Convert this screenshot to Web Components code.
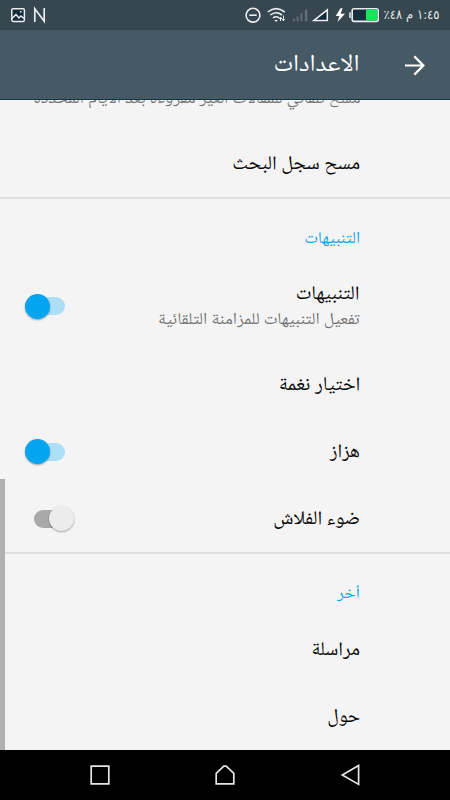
<!DOCTYPE html>
<html lang="ar">
<head>
<meta charset="utf-8">
<title>الاعدادات</title>
<style>
    html, body { margin: 0; height: 100%; overflow: hidden; background: #f4f4f4; }
</style>
</head>
<body>
<settings-screen></settings-screen>

<script>
// One line of Arabic text, condensed or widened to the given width
class FitText extends HTMLElement{
    constructor(){
        super();
        this.attachShadow({ mode: "open" });
    }
    connectedCallback(){
        let width = Number(this.getAttribute("width"));
        this.shadowRoot.innerHTML = `
        <style>
        :host{
            display: flex;
            justify-content: flex-start;
            direction: rtl;
            width: ${width}px;
            white-space: nowrap;
        }
        span{
            flex: none;
            transform-origin: 100% 50%;
        }
        </style>
        <span><slot></slot></span>
        `;
        let span = this.shadowRoot.querySelector("span");
        let natural = span.getBoundingClientRect().width;
        if (natural) span.style.transform = `scaleX(${width / natural})`;
    }
}

class StatusBar extends HTMLElement{
    constructor(){
        super();
        this.attachShadow({ mode: "open" });
    }
    connectedCallback(){
        this.shadowRoot.innerHTML = `
        <style>
        :host{
            display: flex;
            justify-content: space-between;
            direction: ltr;
            height: 30px;
            background: #37474f;
            color: #e4e8ea;
            font-family: "DejaVu Sans", sans-serif;
            font-size: 13px;
            line-height: 29px;
        }
        svg{ display: block; }
        .info{
            display: flex;
            padding-right: 10px;
        }
        .clock{ margin-left: 5px; }
        </style>
        <svg width="60" height="30" fill="none" stroke="#e8edef" stroke-width="1.5">
            <rect x="11.8" y="8.8" width="12.6" height="12.6" rx="1.3" fill="#172c39"/>
            <path d="M12 18.5L16 14.5L19 18L21 16L24 18.5" />
            <path d="M20 11.7h1.6" />
            <path d="M34.8 22V8.8L44.2 21.2V8" stroke-width="1.7"/>
        </svg>
        <div class="info">
            <svg width="136" height="30" fill="none" stroke="#eceff1" stroke-width="1.6">
                <circle cx="10" cy="15.2" r="6.9"/>
                <path d="M6.3 15.2h7.4"/>
                <path d="M24.8 12Q33 5.3 41.8 12M27.3 15Q33 10.4 39 15M30 18Q33 15.5 36 18"/>
                <path d="M31.3 20h3.6l-1.8 2z" fill="#eceff1" stroke="none"/>
                <path d="M37.5 21v-3.6m-1.4 1.6l1.4-1.8 1.4 1.8M40.4 15.5v5.2m-1.3-1.6l1.3 1.7 1.3-1.7" stroke-width="1"/>
                <g fill="#5f6e74" stroke="none">
                    <path d="M50 19h2v2.2h-2zM53.6 16.5h2v4.7h-2zM57.4 13.3h2v7.9h-2zM61.8 9.5h2.6v11.7h-2.6z"/>
                </g>
                <path d="M70.8 20.6L84.3 9.8v10.8z" fill="#122b3b" stroke-width="1.5"/>
                <path d="M97.5 8.2L92.7 16h3.6l-1.8 6 7.5-8.3h-4.3l1.8-5.5z" fill="#fff" stroke="none"/>
                <rect x="109.2" y="8.8" width="26" height="12.6" rx="1.8" fill="#17303e"/>
                <path d="M123 9.8h11.2v10.6h-11.2z" fill="#10ea59" stroke="none"/>
                <path d="M107 12.3v5.6" stroke-width="1.5"/>
            </svg>
            <fit-text class="clock" width="56">١:٤٥ م ٤٨٪</fit-text>
        </div>
        `;
    }
}

class AppBar extends HTMLElement{
    constructor(){
        super();
        this.attachShadow({ mode: "open" });
    }
    connectedCallback(){
        this.shadowRoot.innerHTML = `
        <style>
        :host{
            display: flex;
            direction: rtl;
            align-items: center;
            height: 69px;
            padding-right: 24px;
            background: #455a64;
            border-bottom: 1px solid #123745;
            color: #fff;
            font-size: 24px;
            line-height: 30px;
        }
        fit-text{ margin-right: 44px; }
        </style>
        <svg width="22" height="22" fill="none" stroke="#fff" stroke-width="2.2">
            <path d="M1 11.5h18.5M10.3 2.4L19.4 11.5L10.3 20.6"/>
        </svg>
        <fit-text width="86"><slot></slot></fit-text>
        `;
    }
}

class SettingsHeader extends HTMLElement{
    constructor(){
        super();
        this.attachShadow({ mode: "open" });
    }
    connectedCallback(){
        this.shadowRoot.innerHTML = `
        <style>
        :host{
            display: block;
            box-sizing: border-box;
            height: 64px;
            padding: 28px 90px 0 0;
            border-top: 2px solid #dedede;
            color: #10a5ec;
            font-size: 16.5px;
            line-height: 23px;
        }
        </style>
        <fit-text width="${this.getAttribute("width")}"><slot></slot></fit-text>
        `;
    }
}

class ToggleSwitch extends HTMLElement{
    constructor(){
        super();
        this.attachShadow({ mode: "open" });
    }
    connectedCallback(){
        this.shadowRoot.innerHTML = `
        <style>
        :host{
            display: flex;
            align-items: center;
            direction: ltr;
            width: 51px;
            height: 26px;
        }
        .track{
            display: flex;
            align-items: center;
            width: 31.5px;
            height: 18px;
            margin-left: 9.5px;
            border-radius: 9px;
            background: #a9a9a9;
        }
        .thumb{
            flex: none;
            width: 25px;
            height: 25px;
            margin-left: 15px;
            border-radius: 50%;
            background: #ececec;
            box-shadow: 0 1px 2px rgba(0,0,0,.35);
        }
        :host([on]) .track{ background: #acdff6; }
        :host([on]) .thumb{ margin-left: -9px; background: #03a4f0; }
        </style>
        <div class="track"><div class="thumb"></div></div>
        `;
    }
}

class SettingsRow extends HTMLElement{
    constructor(){
        super();
        this.attachShadow({ mode: "open" });
    }
    connectedCallback(){
        this.shadowRoot.innerHTML = `
        <style>
        :host{
            display: flex;
            direction: rtl;
            align-items: center;
            justify-content: space-between;
            box-sizing: border-box;
            height: 67px;
            padding: 0 90px 0 24px;
            color: #080808;
            font-size: 19.5px;
            line-height: 26px;
        }
        :host([tall]){ height: 90px; }
        .text{ padding-top: 2px; }
        ::slotted([slot="summary"]){
            color: #757575;
            font-size: 16.5px;
            line-height: 24px;
        }
        </style>
        <div class="text">
            <fit-text width="${this.getAttribute("width")}"><slot></slot></fit-text>
            <slot name="summary"></slot>
        </div>
        <slot name="switch"></slot>
        `;
    }
}

class NavBar extends HTMLElement{
    constructor(){
        super();
        this.attachShadow({ mode: "open" });
    }
    connectedCallback(){
        this.shadowRoot.innerHTML = `
        <style>
        :host{
            display: flex;
            align-items: center;
            justify-content: space-around;
            direction: ltr;
            height: 50px;
            padding: 0 37px;
            background: #000;
        }
        </style>
        <svg width="24" height="24" fill="none" stroke="#e6e6e6" stroke-width="1.7"><path d="M3.2 3.2h17.6v17.6H3.2z"/></svg>
        <svg width="24" height="24" fill="none" stroke="#e6e6e6" stroke-width="1.7"><path d="M3.2 10.3L10.8 3.2h2.4L20.8 10.3v10.5H3.2z"/></svg>
        <svg width="24" height="24" fill="none" stroke="#e6e6e6" stroke-width="1.7"><path d="M20.6 2.4v19L4.3 12z"/></svg>
        `;
    }
}

class SettingsScreen extends HTMLElement{
    constructor(){
        super();
        this.attachShadow({ mode: "open" });
    }
    connectedCallback(){
        this.shadowRoot.innerHTML = `
        <style>
        :host{
            display: flex;
            flex-direction: column;
            position: relative;
            width: 450px;
            height: 800px;
            direction: rtl;
            background: #f4f4f4;
            font-family: "Noto Naskh Arabic UI", "Noto Sans Arabic", "DejaVu Sans", sans-serif;
        }
        .list{
            display: flex;
            flex-direction: column;
            flex: 1;
            min-height: 0;
            overflow: hidden;
        }
        .cut{
            margin: -13px 90px 19px 0;
            color: #757575;
            font-size: 16.5px;
            line-height: 24px;
        }
        .scroll{
            position: absolute;
            left: 0;
            top: 479px;
            width: 5px;
            height: 271px;
            background: #b0b0b0;
        }
        </style>
        <status-bar></status-bar>
        <app-bar>الاعدادات</app-bar>
        <div class="list">
            <fit-text class="cut" width="327">مسح تلقائي للمقالات الغير مقروءة بعد الايام المحددة</fit-text>
            <settings-row width="128">مسح سجل البحث</settings-row>
            <settings-header width="56">التنبيهات</settings-header>
            <settings-row tall width="64">التنبيهات
                <fit-text slot="summary" width="202">تفعيل التنبيهات للمزامنة التلقائية</fit-text>
                <toggle-switch slot="switch" on></toggle-switch>
            </settings-row>
            <settings-row width="82">اختيار نغمة</settings-row>
            <settings-row width="30">هزاز<toggle-switch slot="switch" on></toggle-switch></settings-row>
            <settings-row width="87">ضوء الفلاش<toggle-switch slot="switch"></toggle-switch></settings-row>
            <settings-header width="23">أخر</settings-header>
            <settings-row width="49">مراسلة</settings-row>
            <settings-row width="33">حول</settings-row>
        </div>
        <nav-bar></nav-bar>
        <div class="scroll"></div>
        `;
    }
}

window.customElements.define("fit-text", FitText);
window.customElements.define("toggle-switch", ToggleSwitch);
window.customElements.define("status-bar", StatusBar);
window.customElements.define("app-bar", AppBar);
window.customElements.define("settings-header", SettingsHeader);
window.customElements.define("settings-row", SettingsRow);
window.customElements.define("nav-bar", NavBar);
window.customElements.define("settings-screen", SettingsScreen);
</script>
</body>
</html>
